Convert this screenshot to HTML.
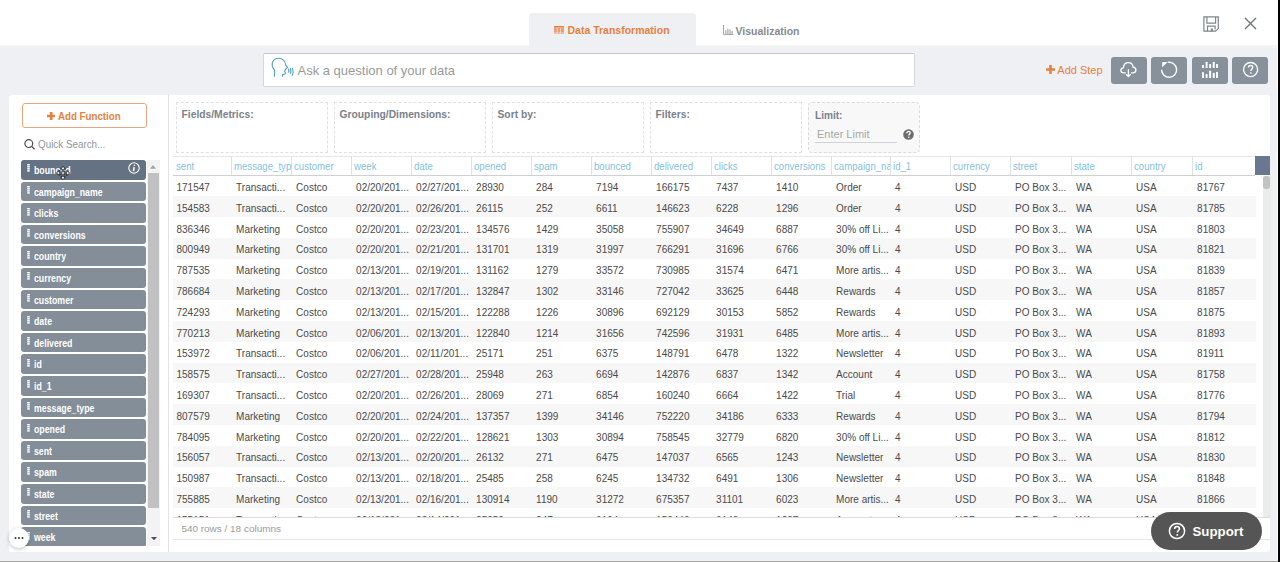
<!DOCTYPE html>
<html><head><meta charset="utf-8">
<style>
*{box-sizing:border-box;margin:0;padding:0}
html,body{width:1280px;height:562px;overflow:hidden;background:#eff0f4;font-family:"Liberation Sans",sans-serif}
.a{position:absolute}
.t{position:absolute;white-space:nowrap}
</style></head><body>

<div class="a" style="left:0;top:0;width:1280px;height:45px;background:#fff"></div>
<div class="a" style="left:0;top:45px;width:529px;height:3px;background:#f3f3f4"></div>
<div class="a" style="left:696px;top:45px;width:584px;height:3px;background:#f3f3f4"></div>
<div class="a" style="left:529px;top:13px;width:167px;height:32px;background:#eff0f4;border-radius:3px 3px 0 0"></div>
<svg class="a" style="left:554px;top:26px" width="10" height="8" viewBox="0 0 10 8"><g fill="#e8844a"><rect x="0" y="0" width="10" height="1.7"/><rect x="0" y="2.3" width="2.8" height="1.5"/><rect x="3.4" y="2.3" width="3" height="1.5"/><rect x="7" y="2.3" width="3" height="1.5"/><rect x="0" y="4.3" width="2.8" height="1.5"/><rect x="3.4" y="4.3" width="3" height="1.5"/><rect x="7" y="4.3" width="3" height="1.5"/><rect x="0" y="6.3" width="2.8" height="1.4" opacity="0.7"/><rect x="3.4" y="6.3" width="3" height="1.4" opacity="0.7"/><rect x="7" y="6.3" width="3" height="1.4" opacity="0.7"/></g></svg>
<div class="t" style="left:567.5px;top:24px;font-size:10.5px;font-weight:bold;color:#e5813e;line-height:12px">Data Transformation</div>
<svg class="a" style="left:723px;top:25px" width="11" height="10" viewBox="0 0 11 10"><path d="M0.5 0 V9.5 H10.5" fill="none" stroke="#9a9ea4" stroke-width="0.9"/><g fill="#a4a8ad"><rect x="2.2" y="5.2" width="1.2" height="3.8"/><rect x="4.3" y="3.8" width="1.2" height="5.2"/><rect x="6.4" y="4.6" width="1.2" height="4.4"/><rect x="8.5" y="6" width="1.2" height="3"/></g></svg>
<div class="t" style="left:735.5px;top:24.5px;font-size:10.5px;font-weight:bold;color:#858a91;line-height:12px">Visualization</div>
<svg class="a" style="left:1203px;top:16px" width="17" height="17" viewBox="0 0 17 17"><g fill="none" stroke="#80858c" stroke-width="1.2"><path d="M0.9 0.9 H15.3 V12.6 L12.6 15.2 H0.9 Z"/><path d="M3.9 0.9 V7.2 H12.6 V0.9"/><path d="M4.5 15.2 V10.2 H12.1 V13.5"/></g><rect x="7.8" y="12.4" width="2" height="3" fill="#80858c"/></svg>
<svg class="a" style="left:1244px;top:17px" width="13" height="13" viewBox="0 0 13 13"><g stroke="#6f747b" stroke-width="1.4"><path d="M1 1 L12 12 M12 1 L1 12"/></g></svg>
<div class="a" style="left:263px;top:53px;width:652px;height:34px;background:#fff;border:1px solid #d6d6d9;border-top-color:#c6c6c9;border-radius:2px"></div>
<svg class="a" style="left:266px;top:54px" width="34" height="28" viewBox="0 0 34 28"><g fill="none" stroke="#5aa0c8" stroke-width="1.15" stroke-linejoin="round"><path d="M8.5 22.7 V15.8 C6.6 14 5.9 11.6 6.2 9.6 C6.9 6 9.5 4.2 12.8 4.2 C16.5 4.2 19.4 7 19.6 11 L21.6 13.3 L19.8 15 C19.4 16 18.8 16.7 18.6 17.4 C19.3 18 19.5 19 19.3 20 L16.5 20.6 V22.7"/><path d="M22.5 14.8 Q23.2 16.7 22.5 18.6"/><path d="M24.4 14 Q25.4 16.9 24.4 19.8"/><path d="M26.4 13.9 Q28 17.8 26.2 21.8"/></g></svg>
<div class="t" style="left:297.5px;top:63px;font-size:13px;color:#9a9a9a;line-height:16px">Ask a question of your data</div>
<svg class="a" style="left:1045.5px;top:65px" width="9" height="9" viewBox="0 0 9 9"><path d="M3.2 0 H5.8 V3.2 H9 V5.8 H5.8 V9 H3.2 V5.8 H0 V3.2 H3.2 Z" fill="#e5813e"/></svg>
<div class="t" style="left:1057.3px;top:63.1px;font-size:11px;color:#e5813e;line-height:15px">Add Step</div>
<div class="a" style="left:1110.9px;top:56.9px;width:36px;height:27px;background:#86919b;border-radius:3px"></div>
<div class="a" style="left:1151.25px;top:56.9px;width:36px;height:27px;background:#86919b;border-radius:3px"></div>
<div class="a" style="left:1191.75px;top:56.9px;width:36px;height:27px;background:#86919b;border-radius:3px"></div>
<div class="a" style="left:1232.4px;top:56.9px;width:36px;height:27px;background:#86919b;border-radius:3px"></div>
<svg class="a" style="left:1110px;top:56px" width="37" height="28" viewBox="0 0 37 28"><g fill="none" stroke="#fff" stroke-width="1.3" stroke-linejoin="round"><path d="M15.8 16.9 H13.6 C11.9 16.9 10.9 15.6 10.9 14.3 C10.9 12.9 12 11.8 13.4 11.8 C13.6 8.8 15.6 6.6 18.3 6.6 C21 6.6 22.9 8.6 23.1 11.2 C24.8 11.3 25.9 12.6 25.9 14.1 C25.9 15.7 24.7 16.9 23.1 16.9 H21"/><path d="M18.4 13.2 V20.4 M16.1 18.2 L18.4 20.6 L20.7 18.2"/></g></svg>
<svg class="a" style="left:1151px;top:56px" width="37" height="28" viewBox="0 0 37 28"><path d="M10.6 13.8 A7.5 7.5 0 1 0 16.8 6.4" fill="none" stroke="#fff" stroke-width="1.4"/><path d="M11.2 5.9 H16.6 L11.2 11.3 Z" fill="#fff"/></svg>
<svg class="a" style="left:1190px;top:56px" width="37" height="28" viewBox="0 0 37 28"><g fill="#fff"><rect x="12" y="9.1" width="2" height="2.8"/><rect x="15.6" y="5.9" width="2" height="6"/><rect x="19.1" y="8.1" width="2" height="3.8"/><rect x="22.75" y="5.9" width="2" height="6"/><rect x="26" y="8.1" width="2" height="3.8"/><rect x="12" y="16.25" width="2" height="5.65"/><rect x="15.6" y="18.1" width="2" height="3.8"/><rect x="19.1" y="14.7" width="2" height="7.2"/><rect x="22.75" y="16.9" width="2" height="5"/><rect x="26" y="15.9" width="2" height="6"/></g></svg>
<svg class="a" style="left:1232px;top:56px" width="37" height="28" viewBox="0 0 37 28"><circle cx="18.6" cy="13.5" r="7.05" fill="none" stroke="#fff" stroke-width="1.35"/><path d="M16.4 11.6 C16.4 10.2 17.4 9.5 18.6 9.5 C19.9 9.5 20.8 10.3 20.8 11.3 C20.8 12.8 18.9 12.9 18.9 14.9" fill="none" stroke="#fff" stroke-width="1.3"/><circle cx="18.9" cy="17" r="0.85" fill="#fff"/></svg>
<div class="a" style="left:9px;top:95px;width:1261px;height:457px;background:#fff;border-radius:3px"></div>
<div class="a" style="left:168px;top:95px;width:1px;height:457px;background:#e3e3e6"></div>
<div class="a" style="left:22px;top:103px;width:125px;height:25px;border:1px solid #e8a57c;border-radius:3px;background:#fff"></div>
<svg class="a" style="left:46.6px;top:112px" width="8.4" height="8" viewBox="0 0 9 9" preserveAspectRatio="none"><path d="M3.1 0 H5.9 V3.1 H9 V5.9 H5.9 V9 H3.1 V5.9 H0 V3.1 H3.1 Z" fill="#e5813e"/></svg>
<div class="t" style="left:57.8px;top:110.6px;font-size:10.2px;font-weight:bold;color:#e5813e;line-height:12px;transform:scaleX(0.955);transform-origin:0 0">Add Function</div>
<svg class="a" style="left:24px;top:139px" width="12" height="11" viewBox="0 0 12 11"><circle cx="4.8" cy="4.6" r="3.9" fill="none" stroke="#4a4d52" stroke-width="1.2"/><path d="M7.6 7.4 L10.6 10.3" stroke="#4a4d52" stroke-width="1.3"/></svg>
<div class="t" style="left:38px;top:137.8px;font-size:10.4px;color:#9097a0;line-height:13px;transform:scaleX(0.947);transform-origin:0 0">Quick Search...</div>
<div class="a" style="left:21px;top:160.00px;width:125px;height:19.5px;background:#657284;border-radius:3px"></div>
<svg class="a" style="left:27px;top:164.30px" width="3" height="8" viewBox="0 0 3 8"><g fill="#fff"><rect x="0.2" y="0" width="2.6" height="1.5"/><rect x="0.2" y="2.05" width="2.6" height="1.5"/><rect x="0.2" y="4.1" width="2.6" height="1.5"/><rect x="0.2" y="6.15" width="2.6" height="1.5"/></g></svg>
<div class="t" style="left:33.8px;top:164.90px;font-size:10.2px;font-weight:bold;color:#fff;line-height:12px;transform:scaleX(0.86);transform-origin:0 0">bounced</div>
<div class="a" style="left:21px;top:181.60px;width:125px;height:19.5px;background:#848e99;border-radius:3px"></div>
<svg class="a" style="left:27px;top:185.90px" width="3" height="8" viewBox="0 0 3 8"><g fill="#fff"><rect x="0.2" y="0" width="2.6" height="1.5"/><rect x="0.2" y="2.05" width="2.6" height="1.5"/><rect x="0.2" y="4.1" width="2.6" height="1.5"/><rect x="0.2" y="6.15" width="2.6" height="1.5"/></g></svg>
<div class="t" style="left:33.8px;top:186.50px;font-size:10.2px;font-weight:bold;color:#fff;line-height:12px;transform:scaleX(0.86);transform-origin:0 0">campaign_name</div>
<div class="a" style="left:21px;top:203.20px;width:125px;height:19.5px;background:#848e99;border-radius:3px"></div>
<svg class="a" style="left:27px;top:207.50px" width="3" height="8" viewBox="0 0 3 8"><g fill="#fff"><rect x="0.2" y="0" width="2.6" height="1.5"/><rect x="0.2" y="2.05" width="2.6" height="1.5"/><rect x="0.2" y="4.1" width="2.6" height="1.5"/><rect x="0.2" y="6.15" width="2.6" height="1.5"/></g></svg>
<div class="t" style="left:33.8px;top:208.10px;font-size:10.2px;font-weight:bold;color:#fff;line-height:12px;transform:scaleX(0.86);transform-origin:0 0">clicks</div>
<div class="a" style="left:21px;top:224.80px;width:125px;height:19.5px;background:#848e99;border-radius:3px"></div>
<svg class="a" style="left:27px;top:229.10px" width="3" height="8" viewBox="0 0 3 8"><g fill="#fff"><rect x="0.2" y="0" width="2.6" height="1.5"/><rect x="0.2" y="2.05" width="2.6" height="1.5"/><rect x="0.2" y="4.1" width="2.6" height="1.5"/><rect x="0.2" y="6.15" width="2.6" height="1.5"/></g></svg>
<div class="t" style="left:33.8px;top:229.70px;font-size:10.2px;font-weight:bold;color:#fff;line-height:12px;transform:scaleX(0.86);transform-origin:0 0">conversions</div>
<div class="a" style="left:21px;top:246.40px;width:125px;height:19.5px;background:#848e99;border-radius:3px"></div>
<svg class="a" style="left:27px;top:250.70px" width="3" height="8" viewBox="0 0 3 8"><g fill="#fff"><rect x="0.2" y="0" width="2.6" height="1.5"/><rect x="0.2" y="2.05" width="2.6" height="1.5"/><rect x="0.2" y="4.1" width="2.6" height="1.5"/><rect x="0.2" y="6.15" width="2.6" height="1.5"/></g></svg>
<div class="t" style="left:33.8px;top:251.30px;font-size:10.2px;font-weight:bold;color:#fff;line-height:12px;transform:scaleX(0.86);transform-origin:0 0">country</div>
<div class="a" style="left:21px;top:268.00px;width:125px;height:19.5px;background:#848e99;border-radius:3px"></div>
<svg class="a" style="left:27px;top:272.30px" width="3" height="8" viewBox="0 0 3 8"><g fill="#fff"><rect x="0.2" y="0" width="2.6" height="1.5"/><rect x="0.2" y="2.05" width="2.6" height="1.5"/><rect x="0.2" y="4.1" width="2.6" height="1.5"/><rect x="0.2" y="6.15" width="2.6" height="1.5"/></g></svg>
<div class="t" style="left:33.8px;top:272.90px;font-size:10.2px;font-weight:bold;color:#fff;line-height:12px;transform:scaleX(0.86);transform-origin:0 0">currency</div>
<div class="a" style="left:21px;top:289.60px;width:125px;height:19.5px;background:#848e99;border-radius:3px"></div>
<svg class="a" style="left:27px;top:293.90px" width="3" height="8" viewBox="0 0 3 8"><g fill="#fff"><rect x="0.2" y="0" width="2.6" height="1.5"/><rect x="0.2" y="2.05" width="2.6" height="1.5"/><rect x="0.2" y="4.1" width="2.6" height="1.5"/><rect x="0.2" y="6.15" width="2.6" height="1.5"/></g></svg>
<div class="t" style="left:33.8px;top:294.50px;font-size:10.2px;font-weight:bold;color:#fff;line-height:12px;transform:scaleX(0.86);transform-origin:0 0">customer</div>
<div class="a" style="left:21px;top:311.20px;width:125px;height:19.5px;background:#848e99;border-radius:3px"></div>
<svg class="a" style="left:27px;top:315.50px" width="3" height="8" viewBox="0 0 3 8"><g fill="#fff"><rect x="0.2" y="0" width="2.6" height="1.5"/><rect x="0.2" y="2.05" width="2.6" height="1.5"/><rect x="0.2" y="4.1" width="2.6" height="1.5"/><rect x="0.2" y="6.15" width="2.6" height="1.5"/></g></svg>
<div class="t" style="left:33.8px;top:316.10px;font-size:10.2px;font-weight:bold;color:#fff;line-height:12px;transform:scaleX(0.86);transform-origin:0 0">date</div>
<div class="a" style="left:21px;top:332.80px;width:125px;height:19.5px;background:#848e99;border-radius:3px"></div>
<svg class="a" style="left:27px;top:337.10px" width="3" height="8" viewBox="0 0 3 8"><g fill="#fff"><rect x="0.2" y="0" width="2.6" height="1.5"/><rect x="0.2" y="2.05" width="2.6" height="1.5"/><rect x="0.2" y="4.1" width="2.6" height="1.5"/><rect x="0.2" y="6.15" width="2.6" height="1.5"/></g></svg>
<div class="t" style="left:33.8px;top:337.70px;font-size:10.2px;font-weight:bold;color:#fff;line-height:12px;transform:scaleX(0.86);transform-origin:0 0">delivered</div>
<div class="a" style="left:21px;top:354.40px;width:125px;height:19.5px;background:#848e99;border-radius:3px"></div>
<svg class="a" style="left:27px;top:358.70px" width="3" height="8" viewBox="0 0 3 8"><g fill="#fff"><rect x="0.2" y="0" width="2.6" height="1.5"/><rect x="0.2" y="2.05" width="2.6" height="1.5"/><rect x="0.2" y="4.1" width="2.6" height="1.5"/><rect x="0.2" y="6.15" width="2.6" height="1.5"/></g></svg>
<div class="t" style="left:33.8px;top:359.30px;font-size:10.2px;font-weight:bold;color:#fff;line-height:12px;transform:scaleX(0.86);transform-origin:0 0">id</div>
<div class="a" style="left:21px;top:376.00px;width:125px;height:19.5px;background:#848e99;border-radius:3px"></div>
<svg class="a" style="left:27px;top:380.30px" width="3" height="8" viewBox="0 0 3 8"><g fill="#fff"><rect x="0.2" y="0" width="2.6" height="1.5"/><rect x="0.2" y="2.05" width="2.6" height="1.5"/><rect x="0.2" y="4.1" width="2.6" height="1.5"/><rect x="0.2" y="6.15" width="2.6" height="1.5"/></g></svg>
<div class="t" style="left:33.8px;top:380.90px;font-size:10.2px;font-weight:bold;color:#fff;line-height:12px;transform:scaleX(0.86);transform-origin:0 0">id_1</div>
<div class="a" style="left:21px;top:397.60px;width:125px;height:19.5px;background:#848e99;border-radius:3px"></div>
<svg class="a" style="left:27px;top:401.90px" width="3" height="8" viewBox="0 0 3 8"><g fill="#fff"><rect x="0.2" y="0" width="2.6" height="1.5"/><rect x="0.2" y="2.05" width="2.6" height="1.5"/><rect x="0.2" y="4.1" width="2.6" height="1.5"/><rect x="0.2" y="6.15" width="2.6" height="1.5"/></g></svg>
<div class="t" style="left:33.8px;top:402.50px;font-size:10.2px;font-weight:bold;color:#fff;line-height:12px;transform:scaleX(0.86);transform-origin:0 0">message_type</div>
<div class="a" style="left:21px;top:419.20px;width:125px;height:19.5px;background:#848e99;border-radius:3px"></div>
<svg class="a" style="left:27px;top:423.50px" width="3" height="8" viewBox="0 0 3 8"><g fill="#fff"><rect x="0.2" y="0" width="2.6" height="1.5"/><rect x="0.2" y="2.05" width="2.6" height="1.5"/><rect x="0.2" y="4.1" width="2.6" height="1.5"/><rect x="0.2" y="6.15" width="2.6" height="1.5"/></g></svg>
<div class="t" style="left:33.8px;top:424.10px;font-size:10.2px;font-weight:bold;color:#fff;line-height:12px;transform:scaleX(0.86);transform-origin:0 0">opened</div>
<div class="a" style="left:21px;top:440.80px;width:125px;height:19.5px;background:#848e99;border-radius:3px"></div>
<svg class="a" style="left:27px;top:445.10px" width="3" height="8" viewBox="0 0 3 8"><g fill="#fff"><rect x="0.2" y="0" width="2.6" height="1.5"/><rect x="0.2" y="2.05" width="2.6" height="1.5"/><rect x="0.2" y="4.1" width="2.6" height="1.5"/><rect x="0.2" y="6.15" width="2.6" height="1.5"/></g></svg>
<div class="t" style="left:33.8px;top:445.70px;font-size:10.2px;font-weight:bold;color:#fff;line-height:12px;transform:scaleX(0.86);transform-origin:0 0">sent</div>
<div class="a" style="left:21px;top:462.40px;width:125px;height:19.5px;background:#848e99;border-radius:3px"></div>
<svg class="a" style="left:27px;top:466.70px" width="3" height="8" viewBox="0 0 3 8"><g fill="#fff"><rect x="0.2" y="0" width="2.6" height="1.5"/><rect x="0.2" y="2.05" width="2.6" height="1.5"/><rect x="0.2" y="4.1" width="2.6" height="1.5"/><rect x="0.2" y="6.15" width="2.6" height="1.5"/></g></svg>
<div class="t" style="left:33.8px;top:467.30px;font-size:10.2px;font-weight:bold;color:#fff;line-height:12px;transform:scaleX(0.86);transform-origin:0 0">spam</div>
<div class="a" style="left:21px;top:484.00px;width:125px;height:19.5px;background:#848e99;border-radius:3px"></div>
<svg class="a" style="left:27px;top:488.30px" width="3" height="8" viewBox="0 0 3 8"><g fill="#fff"><rect x="0.2" y="0" width="2.6" height="1.5"/><rect x="0.2" y="2.05" width="2.6" height="1.5"/><rect x="0.2" y="4.1" width="2.6" height="1.5"/><rect x="0.2" y="6.15" width="2.6" height="1.5"/></g></svg>
<div class="t" style="left:33.8px;top:488.90px;font-size:10.2px;font-weight:bold;color:#fff;line-height:12px;transform:scaleX(0.86);transform-origin:0 0">state</div>
<div class="a" style="left:21px;top:505.60px;width:125px;height:19.5px;background:#848e99;border-radius:3px"></div>
<svg class="a" style="left:27px;top:509.90px" width="3" height="8" viewBox="0 0 3 8"><g fill="#fff"><rect x="0.2" y="0" width="2.6" height="1.5"/><rect x="0.2" y="2.05" width="2.6" height="1.5"/><rect x="0.2" y="4.1" width="2.6" height="1.5"/><rect x="0.2" y="6.15" width="2.6" height="1.5"/></g></svg>
<div class="t" style="left:33.8px;top:510.50px;font-size:10.2px;font-weight:bold;color:#fff;line-height:12px;transform:scaleX(0.86);transform-origin:0 0">street</div>
<div class="a" style="left:21px;top:527.20px;width:125px;height:19.5px;background:#848e99;border-radius:3px"></div>
<svg class="a" style="left:27px;top:531.50px" width="3" height="8" viewBox="0 0 3 8"><g fill="#fff"><rect x="0.2" y="0" width="2.6" height="1.5"/><rect x="0.2" y="2.05" width="2.6" height="1.5"/><rect x="0.2" y="4.1" width="2.6" height="1.5"/><rect x="0.2" y="6.15" width="2.6" height="1.5"/></g></svg>
<div class="t" style="left:33.8px;top:532.10px;font-size:10.2px;font-weight:bold;color:#fff;line-height:12px;transform:scaleX(0.86);transform-origin:0 0">week</div>
<svg class="a" style="left:128.4px;top:162.3px" width="12" height="12" viewBox="0 0 12 12"><circle cx="6" cy="6" r="5.2" fill="none" stroke="#fff" stroke-width="1.1"/><path d="M6.4 3.2 v0.01" stroke="#fff" stroke-width="1.6" stroke-linecap="round"/><path d="M6.1 5.2 L5.5 9.1" stroke="#fff" stroke-width="1.6"/></svg>
<svg class="a" style="left:56.3px;top:165.6px" width="14" height="14" viewBox="0 0 14 14"><path d="M7 0.5 L9.5 3 H7.8 V6.2 H11 V4.5 L13.5 7 L11 9.5 V7.8 H7.8 V11 H9.5 L7 13.5 L4.5 11 H6.2 V7.8 H3 V9.5 L0.5 7 L3 4.5 V6.2 H6.2 V3 H4.5 Z" fill="#fff" stroke="#111" stroke-width="0.9" stroke-linejoin="round"/></svg>
<div class="a" style="left:147px;top:160px;width:13.3px;height:385.7px;background:#f3f3f3"></div>
<div class="a" style="left:148px;top:173.4px;width:11px;height:334.4px;background:#c1c1c1"></div>
<svg class="a" style="left:150.4px;top:165.2px" width="6" height="3.8" viewBox="0 0 6 3.8"><path d="M0 3.8 L3 0 L6 3.8 Z" fill="#a3a3a3"/></svg>
<svg class="a" style="left:150.5px;top:536.9px" width="6" height="3.4" viewBox="0 0 6 3.4"><path d="M0 0 L6 0 L3 3.4 Z" fill="#505050"/></svg>
<div class="a" style="left:20px;top:545.7px;width:127px;height:6px;background:#fff"></div>
<div class="a" style="left:9px;top:528px;width:20px;height:20px;border-radius:50%;background:#fff;box-shadow:0 1px 4px rgba(0,0,0,0.25)"></div>
<svg class="a" style="left:14px;top:536px" width="10" height="4" viewBox="0 0 10 4"><g fill="#333"><circle cx="1.5" cy="2" r="1"/><circle cx="5" cy="2" r="1"/><circle cx="8.5" cy="2" r="1"/></g></svg>
<div class="a" style="left:176px;top:102px;width:152px;height:51px;border:1px dashed #e0e0e0"></div>
<div class="t" style="left:181.5px;top:108px;font-size:10.3px;font-weight:bold;color:#79818c;line-height:13px">Fields/Metrics:</div>
<div class="a" style="left:334px;top:102px;width:152px;height:51px;border:1px dashed #e0e0e0"></div>
<div class="t" style="left:339.5px;top:108px;font-size:10.3px;font-weight:bold;color:#79818c;line-height:13px">Grouping/Dimensions:</div>
<div class="a" style="left:492px;top:102px;width:152px;height:51px;border:1px dashed #e0e0e0"></div>
<div class="t" style="left:497.5px;top:108px;font-size:10.3px;font-weight:bold;color:#79818c;line-height:13px">Sort by:</div>
<div class="a" style="left:650px;top:102px;width:152px;height:51px;border:1px dashed #e0e0e0"></div>
<div class="t" style="left:655.5px;top:108px;font-size:10.3px;font-weight:bold;color:#79818c;line-height:13px">Filters:</div>
<div class="a" style="left:808px;top:102px;width:112px;height:51px;border:1px dashed #dcdcdc;border-radius:4px;background:#f8f8f8"></div>
<div class="t" style="left:815px;top:108.5px;font-size:10.1px;font-weight:bold;color:#79818c;line-height:13px">Limit:</div>
<div class="t" style="left:817px;top:127px;font-size:11px;color:#a7a7a7;line-height:14px">Enter Limit</div>
<div class="a" style="left:815px;top:141.5px;width:82px;height:1px;background:#d0d3d8"></div>
<svg class="a" style="left:903px;top:128.5px" width="11" height="11" viewBox="0 0 11 11"><circle cx="5.5" cy="5.5" r="5.3" fill="#6e6e6e"/><path d="M3.8 4.2 C3.8 3 4.6 2.4 5.5 2.4 C6.5 2.4 7.2 3 7.2 3.9 C7.2 5 5.8 5.1 5.8 6.5" fill="none" stroke="#fff" stroke-width="1.3"/><circle cx="5.8" cy="8.3" r="0.8" fill="#fff"/></svg>
<div class="a" style="left:173.0px;top:155.5px;width:1097.0px;height:1px;background:#e6e6e6"></div>
<div class="a" style="left:173.0px;top:174.7px;width:1082.0px;height:1px;background:#cdd0d4"></div>
<div class="a" style="left:231.00px;top:156px;width:1px;height:19px;background:#dfe1e4"></div>
<div class="a" style="left:291.00px;top:156px;width:1px;height:19px;background:#dfe1e4"></div>
<div class="a" style="left:351.00px;top:156px;width:1px;height:19px;background:#dfe1e4"></div>
<div class="a" style="left:411.00px;top:156px;width:1px;height:19px;background:#dfe1e4"></div>
<div class="a" style="left:471.00px;top:156px;width:1px;height:19px;background:#dfe1e4"></div>
<div class="a" style="left:531.00px;top:156px;width:1px;height:19px;background:#dfe1e4"></div>
<div class="a" style="left:591.00px;top:156px;width:1px;height:19px;background:#dfe1e4"></div>
<div class="a" style="left:651.00px;top:156px;width:1px;height:19px;background:#dfe1e4"></div>
<div class="a" style="left:711.00px;top:156px;width:1px;height:19px;background:#dfe1e4"></div>
<div class="a" style="left:771.00px;top:156px;width:1px;height:19px;background:#dfe1e4"></div>
<div class="a" style="left:831.00px;top:156px;width:1px;height:19px;background:#dfe1e4"></div>
<div class="a" style="left:890.00px;top:156px;width:1px;height:19px;background:#dfe1e4"></div>
<div class="a" style="left:950.00px;top:156px;width:1px;height:19px;background:#dfe1e4"></div>
<div class="a" style="left:1010.00px;top:156px;width:1px;height:19px;background:#dfe1e4"></div>
<div class="a" style="left:1071.00px;top:156px;width:1px;height:19px;background:#dfe1e4"></div>
<div class="a" style="left:1131.00px;top:156px;width:1px;height:19px;background:#dfe1e4"></div>
<div class="a" style="left:1192.00px;top:156px;width:1px;height:19px;background:#dfe1e4"></div>
<div class="t" style="left:176.00px;top:159.7px;width:58.82px;overflow:hidden;font-size:10.3px;color:#86bfe0;line-height:13px;transform:scaleX(0.935);transform-origin:0 0">sent</div>
<div class="t" style="left:233.50px;top:159.7px;width:61.50px;overflow:hidden;font-size:10.3px;color:#86bfe0;line-height:13px;transform:scaleX(0.935);transform-origin:0 0">message_type</div>
<div class="t" style="left:293.50px;top:159.7px;width:61.50px;overflow:hidden;font-size:10.3px;color:#86bfe0;line-height:13px;transform:scaleX(0.935);transform-origin:0 0">customer</div>
<div class="t" style="left:353.50px;top:159.7px;width:61.50px;overflow:hidden;font-size:10.3px;color:#86bfe0;line-height:13px;transform:scaleX(0.935);transform-origin:0 0">week</div>
<div class="t" style="left:413.50px;top:159.7px;width:61.50px;overflow:hidden;font-size:10.3px;color:#86bfe0;line-height:13px;transform:scaleX(0.935);transform-origin:0 0">date</div>
<div class="t" style="left:473.50px;top:159.7px;width:61.50px;overflow:hidden;font-size:10.3px;color:#86bfe0;line-height:13px;transform:scaleX(0.935);transform-origin:0 0">opened</div>
<div class="t" style="left:533.50px;top:159.7px;width:61.50px;overflow:hidden;font-size:10.3px;color:#86bfe0;line-height:13px;transform:scaleX(0.935);transform-origin:0 0">spam</div>
<div class="t" style="left:593.50px;top:159.7px;width:61.50px;overflow:hidden;font-size:10.3px;color:#86bfe0;line-height:13px;transform:scaleX(0.935);transform-origin:0 0">bounced</div>
<div class="t" style="left:653.50px;top:159.7px;width:61.50px;overflow:hidden;font-size:10.3px;color:#86bfe0;line-height:13px;transform:scaleX(0.935);transform-origin:0 0">delivered</div>
<div class="t" style="left:713.50px;top:159.7px;width:61.50px;overflow:hidden;font-size:10.3px;color:#86bfe0;line-height:13px;transform:scaleX(0.935);transform-origin:0 0">clicks</div>
<div class="t" style="left:773.50px;top:159.7px;width:61.50px;overflow:hidden;font-size:10.3px;color:#86bfe0;line-height:13px;transform:scaleX(0.935);transform-origin:0 0">conversions</div>
<div class="t" style="left:833.50px;top:159.7px;width:60.43px;overflow:hidden;font-size:10.3px;color:#86bfe0;line-height:13px;transform:scaleX(0.935);transform-origin:0 0">campaign_name</div>
<div class="t" style="left:892.50px;top:159.7px;width:61.50px;overflow:hidden;font-size:10.3px;color:#86bfe0;line-height:13px;transform:scaleX(0.935);transform-origin:0 0">id_1</div>
<div class="t" style="left:952.50px;top:159.7px;width:61.50px;overflow:hidden;font-size:10.3px;color:#86bfe0;line-height:13px;transform:scaleX(0.935);transform-origin:0 0">currency</div>
<div class="t" style="left:1012.50px;top:159.7px;width:62.57px;overflow:hidden;font-size:10.3px;color:#86bfe0;line-height:13px;transform:scaleX(0.935);transform-origin:0 0">street</div>
<div class="t" style="left:1073.50px;top:159.7px;width:61.50px;overflow:hidden;font-size:10.3px;color:#86bfe0;line-height:13px;transform:scaleX(0.935);transform-origin:0 0">state</div>
<div class="t" style="left:1133.50px;top:159.7px;width:62.57px;overflow:hidden;font-size:10.3px;color:#86bfe0;line-height:13px;transform:scaleX(0.935);transform-origin:0 0">country</div>
<div class="t" style="left:1194.50px;top:159.7px;width:64.71px;overflow:hidden;font-size:10.3px;color:#86bfe0;line-height:13px;transform:scaleX(0.935);transform-origin:0 0">id</div>
<div class="a" style="left:1255px;top:156px;width:15px;height:19px;background:#687890"></div>
<div class="a" style="left:173.0px;top:175.4px;width:1083.0px;height:341.9px;overflow:hidden">
<div class="t" style="left:3.50px;top:6.70px;font-size:10px;color:#4a4a4a;line-height:12px">171547</div>
<div class="t" style="left:63.10px;top:6.70px;font-size:10px;color:#4a4a4a;line-height:12px">Transacti...</div>
<div class="t" style="left:123.10px;top:6.70px;font-size:10px;color:#4a4a4a;line-height:12px">Costco</div>
<div class="t" style="left:183.10px;top:6.70px;font-size:10px;color:#4a4a4a;line-height:12px">02/20/201...</div>
<div class="t" style="left:243.10px;top:6.70px;font-size:10px;color:#4a4a4a;line-height:12px">02/27/201...</div>
<div class="t" style="left:303.10px;top:6.70px;font-size:10px;color:#4a4a4a;line-height:12px">28930</div>
<div class="t" style="left:363.10px;top:6.70px;font-size:10px;color:#4a4a4a;line-height:12px">284</div>
<div class="t" style="left:423.10px;top:6.70px;font-size:10px;color:#4a4a4a;line-height:12px">7194</div>
<div class="t" style="left:483.10px;top:6.70px;font-size:10px;color:#4a4a4a;line-height:12px">166175</div>
<div class="t" style="left:543.10px;top:6.70px;font-size:10px;color:#4a4a4a;line-height:12px">7437</div>
<div class="t" style="left:603.10px;top:6.70px;font-size:10px;color:#4a4a4a;line-height:12px">1410</div>
<div class="t" style="left:663.10px;top:6.70px;font-size:10px;color:#4a4a4a;line-height:12px">Order</div>
<div class="t" style="left:722.10px;top:6.70px;font-size:10px;color:#4a4a4a;line-height:12px">4</div>
<div class="t" style="left:782.10px;top:6.70px;font-size:10px;color:#4a4a4a;line-height:12px">USD</div>
<div class="t" style="left:842.10px;top:6.70px;font-size:10px;color:#4a4a4a;line-height:12px">PO Box 3...</div>
<div class="t" style="left:903.10px;top:6.70px;font-size:10px;color:#4a4a4a;line-height:12px">WA</div>
<div class="t" style="left:963.10px;top:6.70px;font-size:10px;color:#4a4a4a;line-height:12px">USA</div>
<div class="t" style="left:1024.10px;top:6.70px;font-size:10px;color:#4a4a4a;line-height:12px">81767</div>
<div class="a" style="left:0;top:20.80px;width:1083.0px;height:20.8px;background:#f7f7f7"></div>
<div class="t" style="left:3.50px;top:27.50px;font-size:10px;color:#4a4a4a;line-height:12px">154583</div>
<div class="t" style="left:63.10px;top:27.50px;font-size:10px;color:#4a4a4a;line-height:12px">Transacti...</div>
<div class="t" style="left:123.10px;top:27.50px;font-size:10px;color:#4a4a4a;line-height:12px">Costco</div>
<div class="t" style="left:183.10px;top:27.50px;font-size:10px;color:#4a4a4a;line-height:12px">02/20/201...</div>
<div class="t" style="left:243.10px;top:27.50px;font-size:10px;color:#4a4a4a;line-height:12px">02/26/201...</div>
<div class="t" style="left:303.10px;top:27.50px;font-size:10px;color:#4a4a4a;line-height:12px">26115</div>
<div class="t" style="left:363.10px;top:27.50px;font-size:10px;color:#4a4a4a;line-height:12px">252</div>
<div class="t" style="left:423.10px;top:27.50px;font-size:10px;color:#4a4a4a;line-height:12px">6611</div>
<div class="t" style="left:483.10px;top:27.50px;font-size:10px;color:#4a4a4a;line-height:12px">146623</div>
<div class="t" style="left:543.10px;top:27.50px;font-size:10px;color:#4a4a4a;line-height:12px">6228</div>
<div class="t" style="left:603.10px;top:27.50px;font-size:10px;color:#4a4a4a;line-height:12px">1296</div>
<div class="t" style="left:663.10px;top:27.50px;font-size:10px;color:#4a4a4a;line-height:12px">Order</div>
<div class="t" style="left:722.10px;top:27.50px;font-size:10px;color:#4a4a4a;line-height:12px">4</div>
<div class="t" style="left:782.10px;top:27.50px;font-size:10px;color:#4a4a4a;line-height:12px">USD</div>
<div class="t" style="left:842.10px;top:27.50px;font-size:10px;color:#4a4a4a;line-height:12px">PO Box 3...</div>
<div class="t" style="left:903.10px;top:27.50px;font-size:10px;color:#4a4a4a;line-height:12px">WA</div>
<div class="t" style="left:963.10px;top:27.50px;font-size:10px;color:#4a4a4a;line-height:12px">USA</div>
<div class="t" style="left:1024.10px;top:27.50px;font-size:10px;color:#4a4a4a;line-height:12px">81785</div>
<div class="t" style="left:3.50px;top:48.30px;font-size:10px;color:#4a4a4a;line-height:12px">836346</div>
<div class="t" style="left:63.10px;top:48.30px;font-size:10px;color:#4a4a4a;line-height:12px">Marketing</div>
<div class="t" style="left:123.10px;top:48.30px;font-size:10px;color:#4a4a4a;line-height:12px">Costco</div>
<div class="t" style="left:183.10px;top:48.30px;font-size:10px;color:#4a4a4a;line-height:12px">02/20/201...</div>
<div class="t" style="left:243.10px;top:48.30px;font-size:10px;color:#4a4a4a;line-height:12px">02/23/201...</div>
<div class="t" style="left:303.10px;top:48.30px;font-size:10px;color:#4a4a4a;line-height:12px">134576</div>
<div class="t" style="left:363.10px;top:48.30px;font-size:10px;color:#4a4a4a;line-height:12px">1429</div>
<div class="t" style="left:423.10px;top:48.30px;font-size:10px;color:#4a4a4a;line-height:12px">35058</div>
<div class="t" style="left:483.10px;top:48.30px;font-size:10px;color:#4a4a4a;line-height:12px">755907</div>
<div class="t" style="left:543.10px;top:48.30px;font-size:10px;color:#4a4a4a;line-height:12px">34649</div>
<div class="t" style="left:603.10px;top:48.30px;font-size:10px;color:#4a4a4a;line-height:12px">6887</div>
<div class="t" style="left:663.10px;top:48.30px;font-size:10px;color:#4a4a4a;line-height:12px">30% off Li...</div>
<div class="t" style="left:722.10px;top:48.30px;font-size:10px;color:#4a4a4a;line-height:12px">4</div>
<div class="t" style="left:782.10px;top:48.30px;font-size:10px;color:#4a4a4a;line-height:12px">USD</div>
<div class="t" style="left:842.10px;top:48.30px;font-size:10px;color:#4a4a4a;line-height:12px">PO Box 3...</div>
<div class="t" style="left:903.10px;top:48.30px;font-size:10px;color:#4a4a4a;line-height:12px">WA</div>
<div class="t" style="left:963.10px;top:48.30px;font-size:10px;color:#4a4a4a;line-height:12px">USA</div>
<div class="t" style="left:1024.10px;top:48.30px;font-size:10px;color:#4a4a4a;line-height:12px">81803</div>
<div class="a" style="left:0;top:62.40px;width:1083.0px;height:20.8px;background:#f7f7f7"></div>
<div class="t" style="left:3.50px;top:69.10px;font-size:10px;color:#4a4a4a;line-height:12px">800949</div>
<div class="t" style="left:63.10px;top:69.10px;font-size:10px;color:#4a4a4a;line-height:12px">Marketing</div>
<div class="t" style="left:123.10px;top:69.10px;font-size:10px;color:#4a4a4a;line-height:12px">Costco</div>
<div class="t" style="left:183.10px;top:69.10px;font-size:10px;color:#4a4a4a;line-height:12px">02/20/201...</div>
<div class="t" style="left:243.10px;top:69.10px;font-size:10px;color:#4a4a4a;line-height:12px">02/21/201...</div>
<div class="t" style="left:303.10px;top:69.10px;font-size:10px;color:#4a4a4a;line-height:12px">131701</div>
<div class="t" style="left:363.10px;top:69.10px;font-size:10px;color:#4a4a4a;line-height:12px">1319</div>
<div class="t" style="left:423.10px;top:69.10px;font-size:10px;color:#4a4a4a;line-height:12px">31997</div>
<div class="t" style="left:483.10px;top:69.10px;font-size:10px;color:#4a4a4a;line-height:12px">766291</div>
<div class="t" style="left:543.10px;top:69.10px;font-size:10px;color:#4a4a4a;line-height:12px">31696</div>
<div class="t" style="left:603.10px;top:69.10px;font-size:10px;color:#4a4a4a;line-height:12px">6766</div>
<div class="t" style="left:663.10px;top:69.10px;font-size:10px;color:#4a4a4a;line-height:12px">30% off Li...</div>
<div class="t" style="left:722.10px;top:69.10px;font-size:10px;color:#4a4a4a;line-height:12px">4</div>
<div class="t" style="left:782.10px;top:69.10px;font-size:10px;color:#4a4a4a;line-height:12px">USD</div>
<div class="t" style="left:842.10px;top:69.10px;font-size:10px;color:#4a4a4a;line-height:12px">PO Box 3...</div>
<div class="t" style="left:903.10px;top:69.10px;font-size:10px;color:#4a4a4a;line-height:12px">WA</div>
<div class="t" style="left:963.10px;top:69.10px;font-size:10px;color:#4a4a4a;line-height:12px">USA</div>
<div class="t" style="left:1024.10px;top:69.10px;font-size:10px;color:#4a4a4a;line-height:12px">81821</div>
<div class="t" style="left:3.50px;top:89.90px;font-size:10px;color:#4a4a4a;line-height:12px">787535</div>
<div class="t" style="left:63.10px;top:89.90px;font-size:10px;color:#4a4a4a;line-height:12px">Marketing</div>
<div class="t" style="left:123.10px;top:89.90px;font-size:10px;color:#4a4a4a;line-height:12px">Costco</div>
<div class="t" style="left:183.10px;top:89.90px;font-size:10px;color:#4a4a4a;line-height:12px">02/13/201...</div>
<div class="t" style="left:243.10px;top:89.90px;font-size:10px;color:#4a4a4a;line-height:12px">02/19/201...</div>
<div class="t" style="left:303.10px;top:89.90px;font-size:10px;color:#4a4a4a;line-height:12px">131162</div>
<div class="t" style="left:363.10px;top:89.90px;font-size:10px;color:#4a4a4a;line-height:12px">1279</div>
<div class="t" style="left:423.10px;top:89.90px;font-size:10px;color:#4a4a4a;line-height:12px">33572</div>
<div class="t" style="left:483.10px;top:89.90px;font-size:10px;color:#4a4a4a;line-height:12px">730985</div>
<div class="t" style="left:543.10px;top:89.90px;font-size:10px;color:#4a4a4a;line-height:12px">31574</div>
<div class="t" style="left:603.10px;top:89.90px;font-size:10px;color:#4a4a4a;line-height:12px">6471</div>
<div class="t" style="left:663.10px;top:89.90px;font-size:10px;color:#4a4a4a;line-height:12px">More artis...</div>
<div class="t" style="left:722.10px;top:89.90px;font-size:10px;color:#4a4a4a;line-height:12px">4</div>
<div class="t" style="left:782.10px;top:89.90px;font-size:10px;color:#4a4a4a;line-height:12px">USD</div>
<div class="t" style="left:842.10px;top:89.90px;font-size:10px;color:#4a4a4a;line-height:12px">PO Box 3...</div>
<div class="t" style="left:903.10px;top:89.90px;font-size:10px;color:#4a4a4a;line-height:12px">WA</div>
<div class="t" style="left:963.10px;top:89.90px;font-size:10px;color:#4a4a4a;line-height:12px">USA</div>
<div class="t" style="left:1024.10px;top:89.90px;font-size:10px;color:#4a4a4a;line-height:12px">81839</div>
<div class="a" style="left:0;top:104.00px;width:1083.0px;height:20.8px;background:#f7f7f7"></div>
<div class="t" style="left:3.50px;top:110.70px;font-size:10px;color:#4a4a4a;line-height:12px">786684</div>
<div class="t" style="left:63.10px;top:110.70px;font-size:10px;color:#4a4a4a;line-height:12px">Marketing</div>
<div class="t" style="left:123.10px;top:110.70px;font-size:10px;color:#4a4a4a;line-height:12px">Costco</div>
<div class="t" style="left:183.10px;top:110.70px;font-size:10px;color:#4a4a4a;line-height:12px">02/13/201...</div>
<div class="t" style="left:243.10px;top:110.70px;font-size:10px;color:#4a4a4a;line-height:12px">02/17/201...</div>
<div class="t" style="left:303.10px;top:110.70px;font-size:10px;color:#4a4a4a;line-height:12px">132847</div>
<div class="t" style="left:363.10px;top:110.70px;font-size:10px;color:#4a4a4a;line-height:12px">1302</div>
<div class="t" style="left:423.10px;top:110.70px;font-size:10px;color:#4a4a4a;line-height:12px">33146</div>
<div class="t" style="left:483.10px;top:110.70px;font-size:10px;color:#4a4a4a;line-height:12px">727042</div>
<div class="t" style="left:543.10px;top:110.70px;font-size:10px;color:#4a4a4a;line-height:12px">33625</div>
<div class="t" style="left:603.10px;top:110.70px;font-size:10px;color:#4a4a4a;line-height:12px">6448</div>
<div class="t" style="left:663.10px;top:110.70px;font-size:10px;color:#4a4a4a;line-height:12px">Rewards</div>
<div class="t" style="left:722.10px;top:110.70px;font-size:10px;color:#4a4a4a;line-height:12px">4</div>
<div class="t" style="left:782.10px;top:110.70px;font-size:10px;color:#4a4a4a;line-height:12px">USD</div>
<div class="t" style="left:842.10px;top:110.70px;font-size:10px;color:#4a4a4a;line-height:12px">PO Box 3...</div>
<div class="t" style="left:903.10px;top:110.70px;font-size:10px;color:#4a4a4a;line-height:12px">WA</div>
<div class="t" style="left:963.10px;top:110.70px;font-size:10px;color:#4a4a4a;line-height:12px">USA</div>
<div class="t" style="left:1024.10px;top:110.70px;font-size:10px;color:#4a4a4a;line-height:12px">81857</div>
<div class="t" style="left:3.50px;top:131.50px;font-size:10px;color:#4a4a4a;line-height:12px">724293</div>
<div class="t" style="left:63.10px;top:131.50px;font-size:10px;color:#4a4a4a;line-height:12px">Marketing</div>
<div class="t" style="left:123.10px;top:131.50px;font-size:10px;color:#4a4a4a;line-height:12px">Costco</div>
<div class="t" style="left:183.10px;top:131.50px;font-size:10px;color:#4a4a4a;line-height:12px">02/13/201...</div>
<div class="t" style="left:243.10px;top:131.50px;font-size:10px;color:#4a4a4a;line-height:12px">02/15/201...</div>
<div class="t" style="left:303.10px;top:131.50px;font-size:10px;color:#4a4a4a;line-height:12px">122288</div>
<div class="t" style="left:363.10px;top:131.50px;font-size:10px;color:#4a4a4a;line-height:12px">1226</div>
<div class="t" style="left:423.10px;top:131.50px;font-size:10px;color:#4a4a4a;line-height:12px">30896</div>
<div class="t" style="left:483.10px;top:131.50px;font-size:10px;color:#4a4a4a;line-height:12px">692129</div>
<div class="t" style="left:543.10px;top:131.50px;font-size:10px;color:#4a4a4a;line-height:12px">30153</div>
<div class="t" style="left:603.10px;top:131.50px;font-size:10px;color:#4a4a4a;line-height:12px">5852</div>
<div class="t" style="left:663.10px;top:131.50px;font-size:10px;color:#4a4a4a;line-height:12px">Rewards</div>
<div class="t" style="left:722.10px;top:131.50px;font-size:10px;color:#4a4a4a;line-height:12px">4</div>
<div class="t" style="left:782.10px;top:131.50px;font-size:10px;color:#4a4a4a;line-height:12px">USD</div>
<div class="t" style="left:842.10px;top:131.50px;font-size:10px;color:#4a4a4a;line-height:12px">PO Box 3...</div>
<div class="t" style="left:903.10px;top:131.50px;font-size:10px;color:#4a4a4a;line-height:12px">WA</div>
<div class="t" style="left:963.10px;top:131.50px;font-size:10px;color:#4a4a4a;line-height:12px">USA</div>
<div class="t" style="left:1024.10px;top:131.50px;font-size:10px;color:#4a4a4a;line-height:12px">81875</div>
<div class="a" style="left:0;top:145.60px;width:1083.0px;height:20.8px;background:#f7f7f7"></div>
<div class="t" style="left:3.50px;top:152.30px;font-size:10px;color:#4a4a4a;line-height:12px">770213</div>
<div class="t" style="left:63.10px;top:152.30px;font-size:10px;color:#4a4a4a;line-height:12px">Marketing</div>
<div class="t" style="left:123.10px;top:152.30px;font-size:10px;color:#4a4a4a;line-height:12px">Costco</div>
<div class="t" style="left:183.10px;top:152.30px;font-size:10px;color:#4a4a4a;line-height:12px">02/06/201...</div>
<div class="t" style="left:243.10px;top:152.30px;font-size:10px;color:#4a4a4a;line-height:12px">02/13/201...</div>
<div class="t" style="left:303.10px;top:152.30px;font-size:10px;color:#4a4a4a;line-height:12px">122840</div>
<div class="t" style="left:363.10px;top:152.30px;font-size:10px;color:#4a4a4a;line-height:12px">1214</div>
<div class="t" style="left:423.10px;top:152.30px;font-size:10px;color:#4a4a4a;line-height:12px">31656</div>
<div class="t" style="left:483.10px;top:152.30px;font-size:10px;color:#4a4a4a;line-height:12px">742596</div>
<div class="t" style="left:543.10px;top:152.30px;font-size:10px;color:#4a4a4a;line-height:12px">31931</div>
<div class="t" style="left:603.10px;top:152.30px;font-size:10px;color:#4a4a4a;line-height:12px">6485</div>
<div class="t" style="left:663.10px;top:152.30px;font-size:10px;color:#4a4a4a;line-height:12px">More artis...</div>
<div class="t" style="left:722.10px;top:152.30px;font-size:10px;color:#4a4a4a;line-height:12px">4</div>
<div class="t" style="left:782.10px;top:152.30px;font-size:10px;color:#4a4a4a;line-height:12px">USD</div>
<div class="t" style="left:842.10px;top:152.30px;font-size:10px;color:#4a4a4a;line-height:12px">PO Box 3...</div>
<div class="t" style="left:903.10px;top:152.30px;font-size:10px;color:#4a4a4a;line-height:12px">WA</div>
<div class="t" style="left:963.10px;top:152.30px;font-size:10px;color:#4a4a4a;line-height:12px">USA</div>
<div class="t" style="left:1024.10px;top:152.30px;font-size:10px;color:#4a4a4a;line-height:12px">81893</div>
<div class="t" style="left:3.50px;top:173.10px;font-size:10px;color:#4a4a4a;line-height:12px">153972</div>
<div class="t" style="left:63.10px;top:173.10px;font-size:10px;color:#4a4a4a;line-height:12px">Transacti...</div>
<div class="t" style="left:123.10px;top:173.10px;font-size:10px;color:#4a4a4a;line-height:12px">Costco</div>
<div class="t" style="left:183.10px;top:173.10px;font-size:10px;color:#4a4a4a;line-height:12px">02/06/201...</div>
<div class="t" style="left:243.10px;top:173.10px;font-size:10px;color:#4a4a4a;line-height:12px">02/11/201...</div>
<div class="t" style="left:303.10px;top:173.10px;font-size:10px;color:#4a4a4a;line-height:12px">25171</div>
<div class="t" style="left:363.10px;top:173.10px;font-size:10px;color:#4a4a4a;line-height:12px">251</div>
<div class="t" style="left:423.10px;top:173.10px;font-size:10px;color:#4a4a4a;line-height:12px">6375</div>
<div class="t" style="left:483.10px;top:173.10px;font-size:10px;color:#4a4a4a;line-height:12px">148791</div>
<div class="t" style="left:543.10px;top:173.10px;font-size:10px;color:#4a4a4a;line-height:12px">6478</div>
<div class="t" style="left:603.10px;top:173.10px;font-size:10px;color:#4a4a4a;line-height:12px">1322</div>
<div class="t" style="left:663.10px;top:173.10px;font-size:10px;color:#4a4a4a;line-height:12px">Newsletter</div>
<div class="t" style="left:722.10px;top:173.10px;font-size:10px;color:#4a4a4a;line-height:12px">4</div>
<div class="t" style="left:782.10px;top:173.10px;font-size:10px;color:#4a4a4a;line-height:12px">USD</div>
<div class="t" style="left:842.10px;top:173.10px;font-size:10px;color:#4a4a4a;line-height:12px">PO Box 3...</div>
<div class="t" style="left:903.10px;top:173.10px;font-size:10px;color:#4a4a4a;line-height:12px">WA</div>
<div class="t" style="left:963.10px;top:173.10px;font-size:10px;color:#4a4a4a;line-height:12px">USA</div>
<div class="t" style="left:1024.10px;top:173.10px;font-size:10px;color:#4a4a4a;line-height:12px">81911</div>
<div class="a" style="left:0;top:187.20px;width:1083.0px;height:20.8px;background:#f7f7f7"></div>
<div class="t" style="left:3.50px;top:193.90px;font-size:10px;color:#4a4a4a;line-height:12px">158575</div>
<div class="t" style="left:63.10px;top:193.90px;font-size:10px;color:#4a4a4a;line-height:12px">Transacti...</div>
<div class="t" style="left:123.10px;top:193.90px;font-size:10px;color:#4a4a4a;line-height:12px">Costco</div>
<div class="t" style="left:183.10px;top:193.90px;font-size:10px;color:#4a4a4a;line-height:12px">02/27/201...</div>
<div class="t" style="left:243.10px;top:193.90px;font-size:10px;color:#4a4a4a;line-height:12px">02/28/201...</div>
<div class="t" style="left:303.10px;top:193.90px;font-size:10px;color:#4a4a4a;line-height:12px">25948</div>
<div class="t" style="left:363.10px;top:193.90px;font-size:10px;color:#4a4a4a;line-height:12px">263</div>
<div class="t" style="left:423.10px;top:193.90px;font-size:10px;color:#4a4a4a;line-height:12px">6694</div>
<div class="t" style="left:483.10px;top:193.90px;font-size:10px;color:#4a4a4a;line-height:12px">142876</div>
<div class="t" style="left:543.10px;top:193.90px;font-size:10px;color:#4a4a4a;line-height:12px">6837</div>
<div class="t" style="left:603.10px;top:193.90px;font-size:10px;color:#4a4a4a;line-height:12px">1342</div>
<div class="t" style="left:663.10px;top:193.90px;font-size:10px;color:#4a4a4a;line-height:12px">Account</div>
<div class="t" style="left:722.10px;top:193.90px;font-size:10px;color:#4a4a4a;line-height:12px">4</div>
<div class="t" style="left:782.10px;top:193.90px;font-size:10px;color:#4a4a4a;line-height:12px">USD</div>
<div class="t" style="left:842.10px;top:193.90px;font-size:10px;color:#4a4a4a;line-height:12px">PO Box 3...</div>
<div class="t" style="left:903.10px;top:193.90px;font-size:10px;color:#4a4a4a;line-height:12px">WA</div>
<div class="t" style="left:963.10px;top:193.90px;font-size:10px;color:#4a4a4a;line-height:12px">USA</div>
<div class="t" style="left:1024.10px;top:193.90px;font-size:10px;color:#4a4a4a;line-height:12px">81758</div>
<div class="t" style="left:3.50px;top:214.70px;font-size:10px;color:#4a4a4a;line-height:12px">169307</div>
<div class="t" style="left:63.10px;top:214.70px;font-size:10px;color:#4a4a4a;line-height:12px">Transacti...</div>
<div class="t" style="left:123.10px;top:214.70px;font-size:10px;color:#4a4a4a;line-height:12px">Costco</div>
<div class="t" style="left:183.10px;top:214.70px;font-size:10px;color:#4a4a4a;line-height:12px">02/20/201...</div>
<div class="t" style="left:243.10px;top:214.70px;font-size:10px;color:#4a4a4a;line-height:12px">02/26/201...</div>
<div class="t" style="left:303.10px;top:214.70px;font-size:10px;color:#4a4a4a;line-height:12px">28069</div>
<div class="t" style="left:363.10px;top:214.70px;font-size:10px;color:#4a4a4a;line-height:12px">271</div>
<div class="t" style="left:423.10px;top:214.70px;font-size:10px;color:#4a4a4a;line-height:12px">6854</div>
<div class="t" style="left:483.10px;top:214.70px;font-size:10px;color:#4a4a4a;line-height:12px">160240</div>
<div class="t" style="left:543.10px;top:214.70px;font-size:10px;color:#4a4a4a;line-height:12px">6664</div>
<div class="t" style="left:603.10px;top:214.70px;font-size:10px;color:#4a4a4a;line-height:12px">1422</div>
<div class="t" style="left:663.10px;top:214.70px;font-size:10px;color:#4a4a4a;line-height:12px">Trial</div>
<div class="t" style="left:722.10px;top:214.70px;font-size:10px;color:#4a4a4a;line-height:12px">4</div>
<div class="t" style="left:782.10px;top:214.70px;font-size:10px;color:#4a4a4a;line-height:12px">USD</div>
<div class="t" style="left:842.10px;top:214.70px;font-size:10px;color:#4a4a4a;line-height:12px">PO Box 3...</div>
<div class="t" style="left:903.10px;top:214.70px;font-size:10px;color:#4a4a4a;line-height:12px">WA</div>
<div class="t" style="left:963.10px;top:214.70px;font-size:10px;color:#4a4a4a;line-height:12px">USA</div>
<div class="t" style="left:1024.10px;top:214.70px;font-size:10px;color:#4a4a4a;line-height:12px">81776</div>
<div class="a" style="left:0;top:228.80px;width:1083.0px;height:20.8px;background:#f7f7f7"></div>
<div class="t" style="left:3.50px;top:235.50px;font-size:10px;color:#4a4a4a;line-height:12px">807579</div>
<div class="t" style="left:63.10px;top:235.50px;font-size:10px;color:#4a4a4a;line-height:12px">Marketing</div>
<div class="t" style="left:123.10px;top:235.50px;font-size:10px;color:#4a4a4a;line-height:12px">Costco</div>
<div class="t" style="left:183.10px;top:235.50px;font-size:10px;color:#4a4a4a;line-height:12px">02/20/201...</div>
<div class="t" style="left:243.10px;top:235.50px;font-size:10px;color:#4a4a4a;line-height:12px">02/24/201...</div>
<div class="t" style="left:303.10px;top:235.50px;font-size:10px;color:#4a4a4a;line-height:12px">137357</div>
<div class="t" style="left:363.10px;top:235.50px;font-size:10px;color:#4a4a4a;line-height:12px">1399</div>
<div class="t" style="left:423.10px;top:235.50px;font-size:10px;color:#4a4a4a;line-height:12px">34146</div>
<div class="t" style="left:483.10px;top:235.50px;font-size:10px;color:#4a4a4a;line-height:12px">752220</div>
<div class="t" style="left:543.10px;top:235.50px;font-size:10px;color:#4a4a4a;line-height:12px">34186</div>
<div class="t" style="left:603.10px;top:235.50px;font-size:10px;color:#4a4a4a;line-height:12px">6333</div>
<div class="t" style="left:663.10px;top:235.50px;font-size:10px;color:#4a4a4a;line-height:12px">Rewards</div>
<div class="t" style="left:722.10px;top:235.50px;font-size:10px;color:#4a4a4a;line-height:12px">4</div>
<div class="t" style="left:782.10px;top:235.50px;font-size:10px;color:#4a4a4a;line-height:12px">USD</div>
<div class="t" style="left:842.10px;top:235.50px;font-size:10px;color:#4a4a4a;line-height:12px">PO Box 3...</div>
<div class="t" style="left:903.10px;top:235.50px;font-size:10px;color:#4a4a4a;line-height:12px">WA</div>
<div class="t" style="left:963.10px;top:235.50px;font-size:10px;color:#4a4a4a;line-height:12px">USA</div>
<div class="t" style="left:1024.10px;top:235.50px;font-size:10px;color:#4a4a4a;line-height:12px">81794</div>
<div class="t" style="left:3.50px;top:256.30px;font-size:10px;color:#4a4a4a;line-height:12px">784095</div>
<div class="t" style="left:63.10px;top:256.30px;font-size:10px;color:#4a4a4a;line-height:12px">Marketing</div>
<div class="t" style="left:123.10px;top:256.30px;font-size:10px;color:#4a4a4a;line-height:12px">Costco</div>
<div class="t" style="left:183.10px;top:256.30px;font-size:10px;color:#4a4a4a;line-height:12px">02/20/201...</div>
<div class="t" style="left:243.10px;top:256.30px;font-size:10px;color:#4a4a4a;line-height:12px">02/22/201...</div>
<div class="t" style="left:303.10px;top:256.30px;font-size:10px;color:#4a4a4a;line-height:12px">128621</div>
<div class="t" style="left:363.10px;top:256.30px;font-size:10px;color:#4a4a4a;line-height:12px">1303</div>
<div class="t" style="left:423.10px;top:256.30px;font-size:10px;color:#4a4a4a;line-height:12px">30894</div>
<div class="t" style="left:483.10px;top:256.30px;font-size:10px;color:#4a4a4a;line-height:12px">758545</div>
<div class="t" style="left:543.10px;top:256.30px;font-size:10px;color:#4a4a4a;line-height:12px">32779</div>
<div class="t" style="left:603.10px;top:256.30px;font-size:10px;color:#4a4a4a;line-height:12px">6820</div>
<div class="t" style="left:663.10px;top:256.30px;font-size:10px;color:#4a4a4a;line-height:12px">30% off Li...</div>
<div class="t" style="left:722.10px;top:256.30px;font-size:10px;color:#4a4a4a;line-height:12px">4</div>
<div class="t" style="left:782.10px;top:256.30px;font-size:10px;color:#4a4a4a;line-height:12px">USD</div>
<div class="t" style="left:842.10px;top:256.30px;font-size:10px;color:#4a4a4a;line-height:12px">PO Box 3...</div>
<div class="t" style="left:903.10px;top:256.30px;font-size:10px;color:#4a4a4a;line-height:12px">WA</div>
<div class="t" style="left:963.10px;top:256.30px;font-size:10px;color:#4a4a4a;line-height:12px">USA</div>
<div class="t" style="left:1024.10px;top:256.30px;font-size:10px;color:#4a4a4a;line-height:12px">81812</div>
<div class="a" style="left:0;top:270.40px;width:1083.0px;height:20.8px;background:#f7f7f7"></div>
<div class="t" style="left:3.50px;top:277.10px;font-size:10px;color:#4a4a4a;line-height:12px">156057</div>
<div class="t" style="left:63.10px;top:277.10px;font-size:10px;color:#4a4a4a;line-height:12px">Transacti...</div>
<div class="t" style="left:123.10px;top:277.10px;font-size:10px;color:#4a4a4a;line-height:12px">Costco</div>
<div class="t" style="left:183.10px;top:277.10px;font-size:10px;color:#4a4a4a;line-height:12px">02/13/201...</div>
<div class="t" style="left:243.10px;top:277.10px;font-size:10px;color:#4a4a4a;line-height:12px">02/20/201...</div>
<div class="t" style="left:303.10px;top:277.10px;font-size:10px;color:#4a4a4a;line-height:12px">26132</div>
<div class="t" style="left:363.10px;top:277.10px;font-size:10px;color:#4a4a4a;line-height:12px">271</div>
<div class="t" style="left:423.10px;top:277.10px;font-size:10px;color:#4a4a4a;line-height:12px">6475</div>
<div class="t" style="left:483.10px;top:277.10px;font-size:10px;color:#4a4a4a;line-height:12px">147037</div>
<div class="t" style="left:543.10px;top:277.10px;font-size:10px;color:#4a4a4a;line-height:12px">6565</div>
<div class="t" style="left:603.10px;top:277.10px;font-size:10px;color:#4a4a4a;line-height:12px">1243</div>
<div class="t" style="left:663.10px;top:277.10px;font-size:10px;color:#4a4a4a;line-height:12px">Newsletter</div>
<div class="t" style="left:722.10px;top:277.10px;font-size:10px;color:#4a4a4a;line-height:12px">4</div>
<div class="t" style="left:782.10px;top:277.10px;font-size:10px;color:#4a4a4a;line-height:12px">USD</div>
<div class="t" style="left:842.10px;top:277.10px;font-size:10px;color:#4a4a4a;line-height:12px">PO Box 3...</div>
<div class="t" style="left:903.10px;top:277.10px;font-size:10px;color:#4a4a4a;line-height:12px">WA</div>
<div class="t" style="left:963.10px;top:277.10px;font-size:10px;color:#4a4a4a;line-height:12px">USA</div>
<div class="t" style="left:1024.10px;top:277.10px;font-size:10px;color:#4a4a4a;line-height:12px">81830</div>
<div class="t" style="left:3.50px;top:297.90px;font-size:10px;color:#4a4a4a;line-height:12px">150987</div>
<div class="t" style="left:63.10px;top:297.90px;font-size:10px;color:#4a4a4a;line-height:12px">Transacti...</div>
<div class="t" style="left:123.10px;top:297.90px;font-size:10px;color:#4a4a4a;line-height:12px">Costco</div>
<div class="t" style="left:183.10px;top:297.90px;font-size:10px;color:#4a4a4a;line-height:12px">02/13/201...</div>
<div class="t" style="left:243.10px;top:297.90px;font-size:10px;color:#4a4a4a;line-height:12px">02/18/201...</div>
<div class="t" style="left:303.10px;top:297.90px;font-size:10px;color:#4a4a4a;line-height:12px">25485</div>
<div class="t" style="left:363.10px;top:297.90px;font-size:10px;color:#4a4a4a;line-height:12px">258</div>
<div class="t" style="left:423.10px;top:297.90px;font-size:10px;color:#4a4a4a;line-height:12px">6245</div>
<div class="t" style="left:483.10px;top:297.90px;font-size:10px;color:#4a4a4a;line-height:12px">134732</div>
<div class="t" style="left:543.10px;top:297.90px;font-size:10px;color:#4a4a4a;line-height:12px">6491</div>
<div class="t" style="left:603.10px;top:297.90px;font-size:10px;color:#4a4a4a;line-height:12px">1306</div>
<div class="t" style="left:663.10px;top:297.90px;font-size:10px;color:#4a4a4a;line-height:12px">Newsletter</div>
<div class="t" style="left:722.10px;top:297.90px;font-size:10px;color:#4a4a4a;line-height:12px">4</div>
<div class="t" style="left:782.10px;top:297.90px;font-size:10px;color:#4a4a4a;line-height:12px">USD</div>
<div class="t" style="left:842.10px;top:297.90px;font-size:10px;color:#4a4a4a;line-height:12px">PO Box 3...</div>
<div class="t" style="left:903.10px;top:297.90px;font-size:10px;color:#4a4a4a;line-height:12px">WA</div>
<div class="t" style="left:963.10px;top:297.90px;font-size:10px;color:#4a4a4a;line-height:12px">USA</div>
<div class="t" style="left:1024.10px;top:297.90px;font-size:10px;color:#4a4a4a;line-height:12px">81848</div>
<div class="a" style="left:0;top:312.00px;width:1083.0px;height:20.8px;background:#f7f7f7"></div>
<div class="t" style="left:3.50px;top:318.70px;font-size:10px;color:#4a4a4a;line-height:12px">755885</div>
<div class="t" style="left:63.10px;top:318.70px;font-size:10px;color:#4a4a4a;line-height:12px">Marketing</div>
<div class="t" style="left:123.10px;top:318.70px;font-size:10px;color:#4a4a4a;line-height:12px">Costco</div>
<div class="t" style="left:183.10px;top:318.70px;font-size:10px;color:#4a4a4a;line-height:12px">02/13/201...</div>
<div class="t" style="left:243.10px;top:318.70px;font-size:10px;color:#4a4a4a;line-height:12px">02/16/201...</div>
<div class="t" style="left:303.10px;top:318.70px;font-size:10px;color:#4a4a4a;line-height:12px">130914</div>
<div class="t" style="left:363.10px;top:318.70px;font-size:10px;color:#4a4a4a;line-height:12px">1190</div>
<div class="t" style="left:423.10px;top:318.70px;font-size:10px;color:#4a4a4a;line-height:12px">31272</div>
<div class="t" style="left:483.10px;top:318.70px;font-size:10px;color:#4a4a4a;line-height:12px">675357</div>
<div class="t" style="left:543.10px;top:318.70px;font-size:10px;color:#4a4a4a;line-height:12px">31101</div>
<div class="t" style="left:603.10px;top:318.70px;font-size:10px;color:#4a4a4a;line-height:12px">6023</div>
<div class="t" style="left:663.10px;top:318.70px;font-size:10px;color:#4a4a4a;line-height:12px">More artis...</div>
<div class="t" style="left:722.10px;top:318.70px;font-size:10px;color:#4a4a4a;line-height:12px">4</div>
<div class="t" style="left:782.10px;top:318.70px;font-size:10px;color:#4a4a4a;line-height:12px">USD</div>
<div class="t" style="left:842.10px;top:318.70px;font-size:10px;color:#4a4a4a;line-height:12px">PO Box 3...</div>
<div class="t" style="left:903.10px;top:318.70px;font-size:10px;color:#4a4a4a;line-height:12px">WA</div>
<div class="t" style="left:963.10px;top:318.70px;font-size:10px;color:#4a4a4a;line-height:12px">USA</div>
<div class="t" style="left:1024.10px;top:318.70px;font-size:10px;color:#4a4a4a;line-height:12px">81866</div>
<div class="t" style="left:3.50px;top:339.50px;font-size:10px;color:#4a4a4a;line-height:12px">155151</div>
<div class="t" style="left:63.10px;top:339.50px;font-size:10px;color:#4a4a4a;line-height:12px">Transacti...</div>
<div class="t" style="left:123.10px;top:339.50px;font-size:10px;color:#4a4a4a;line-height:12px">Costco</div>
<div class="t" style="left:183.10px;top:339.50px;font-size:10px;color:#4a4a4a;line-height:12px">02/13/201...</div>
<div class="t" style="left:243.10px;top:339.50px;font-size:10px;color:#4a4a4a;line-height:12px">02/14/201...</div>
<div class="t" style="left:303.10px;top:339.50px;font-size:10px;color:#4a4a4a;line-height:12px">25050</div>
<div class="t" style="left:363.10px;top:339.50px;font-size:10px;color:#4a4a4a;line-height:12px">247</div>
<div class="t" style="left:423.10px;top:339.50px;font-size:10px;color:#4a4a4a;line-height:12px">6194</div>
<div class="t" style="left:483.10px;top:339.50px;font-size:10px;color:#4a4a4a;line-height:12px">150446</div>
<div class="t" style="left:543.10px;top:339.50px;font-size:10px;color:#4a4a4a;line-height:12px">6148</div>
<div class="t" style="left:603.10px;top:339.50px;font-size:10px;color:#4a4a4a;line-height:12px">1237</div>
<div class="t" style="left:663.10px;top:339.50px;font-size:10px;color:#4a4a4a;line-height:12px">Account</div>
<div class="t" style="left:722.10px;top:339.50px;font-size:10px;color:#4a4a4a;line-height:12px">4</div>
<div class="t" style="left:782.10px;top:339.50px;font-size:10px;color:#4a4a4a;line-height:12px">USD</div>
<div class="t" style="left:842.10px;top:339.50px;font-size:10px;color:#4a4a4a;line-height:12px">PO Box 3...</div>
<div class="t" style="left:903.10px;top:339.50px;font-size:10px;color:#4a4a4a;line-height:12px">WA</div>
<div class="t" style="left:963.10px;top:339.50px;font-size:10px;color:#4a4a4a;line-height:12px">USA</div>
<div class="t" style="left:1024.10px;top:339.50px;font-size:10px;color:#4a4a4a;line-height:12px">81884</div>
</div>
<div class="a" style="left:173.0px;top:517px;width:1097.0px;height:1px;background:#dcdcdc"></div>
<div class="a" style="left:1263px;top:175.5px;width:7.5px;height:341.5px;background:#eaebea"></div>
<div class="a" style="left:1263px;top:176px;width:6.5px;height:13px;background:#c3c3c3;border-radius:3px"></div>
<div class="t" style="left:181.4px;top:522px;font-size:9.96px;color:#9a9a9a;line-height:13px">540 rows / 18 columns</div>
<div class="a" style="left:173.0px;top:539px;width:1097.0px;height:1px;background:#e6e6e6"></div>
<div class="a" style="left:1151px;top:512px;width:111px;height:38px;border-radius:19px;background:#555555"></div>
<svg class="a" style="left:1168px;top:522px" width="18" height="18" viewBox="0 0 18 18"><circle cx="9" cy="9" r="7.6" fill="none" stroke="#fff" stroke-width="1.5"/><path d="M6.6 7 C6.6 5.4 7.7 4.6 9 4.6 C10.4 4.6 11.4 5.5 11.4 6.7 C11.4 8.4 9.3 8.5 9.3 10.6" fill="none" stroke="#fff" stroke-width="1.5"/><circle cx="9.3" cy="12.9" r="0.95" fill="#fff"/></svg>
<div class="t" style="left:1192.5px;top:523.5px;font-size:13.3px;font-weight:bold;color:#fff;line-height:15px">Support</div>
<div class="a" style="left:1278px;top:0;width:2px;height:562px;background:#000"></div>
<div class="a" style="left:1277px;top:45px;width:1px;height:516px;background:#fff"></div>
<div class="a" style="left:0;top:560px;width:1278px;height:1px;background:#f1f1f2"></div>
<div class="a" style="left:0;top:561px;width:1278px;height:1px;background:#a9a9a9"></div>
</body></html>
